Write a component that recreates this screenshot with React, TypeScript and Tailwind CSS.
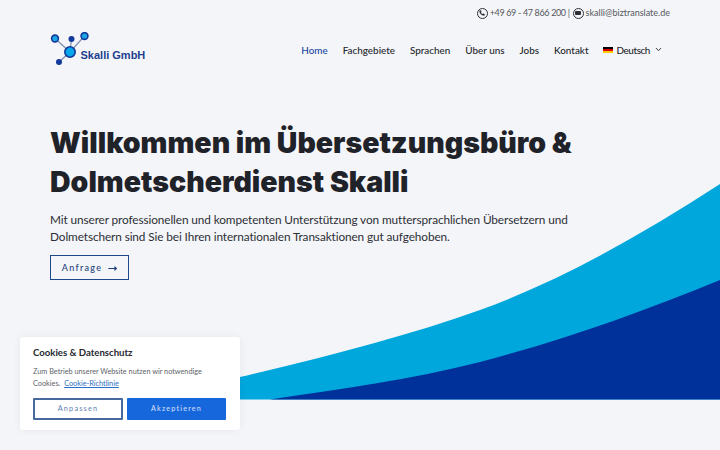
import { Phone, ChevronDown, MoveRight } from "lucide-react";

const body = "font-['Lato','Noto_Sans',sans-serif]";

function Logo() {
  return (
    <div className="flex items-center w-[100px] h-[40px] relative">
      <svg width="42" height="40" viewBox="0 0 42 40" className="shrink-0 relative top-[2px]">
        <g stroke="#7d8fb0" strokeWidth="1.2">
          <line x1="5" y1="6.5" x2="20" y2="20" />
          <line x1="34.5" y1="4" x2="20" y2="20" />
          <line x1="21.5" y1="7" x2="20" y2="20" />
          <line x1="9" y1="30" x2="20" y2="20" />
        </g>
        <circle cx="5" cy="6.5" r="3.4" fill="#1ba6e6" stroke="#12399b" strokeWidth="1.6" />
        <circle cx="34.5" cy="4" r="3.4" fill="#1ba6e6" stroke="#12399b" strokeWidth="1.6" />
        <circle cx="21.5" cy="7" r="3" fill="#12399b" />
        <circle cx="20" cy="20" r="5.2" fill="#06a7ec" stroke="#12399b" strokeWidth="1.6" />
        <circle cx="9" cy="30" r="3" fill="#12399b" />
      </svg>
      <span className="absolute left-[30.5px] top-[18px] font-['Liberation_Sans',sans-serif] font-bold text-[11px] leading-[14px] text-[#1d3f8f] whitespace-nowrap">
        Skalli GmbH
      </span>
    </div>
  );
}

const nav = ["Fachgebiete", "Sprachen", "Über uns", "Jobs", "Kontakt"];

export default function App() {
  return (
    <div className={`relative w-[720px] h-[450px] overflow-hidden bg-[#f4f5f8] ${body}`}>
      <svg className="absolute left-0 top-0" width="720" height="450" viewBox="0 0 720 450">
        <path d="M100 399.5 C 180 388, 240 377, 240 377 C 330 356, 410 335, 480 310 C 560 281, 640 236, 720 184 V399.5 Z" fill="#00a7dd" />
        <path d="M270 399.5 C 340 389, 410 380, 480 362 C 560 341, 640 313, 720 280 V399.5 Z" fill="#00319b" />
      </svg>

      <div className="relative flex flex-col px-[50px]">
        <div className="flex justify-end items-center h-[26px] gap-[2px] text-[9px] text-[#55585f] whitespace-nowrap">
          <span className="flex items-center justify-center w-[11px] h-[11px] rounded-full border border-[#2c2f36]">
            <Phone size={6} fill="#2c2f36" strokeWidth={1} color="#2c2f36" />
          </span>
          <span className="tracking-[-0.35px]">+49 69 - 47 866 200 |</span>
          <span className="flex items-center justify-center w-[11px] h-[11px] rounded-full border border-[#2c2f36] ml-[1px]">
            <span className="w-[6px] h-[4px] rounded-[1px] bg-[#2c2f36]" />
          </span>
          <span>skalli@biztranslate.de</span>
        </div>

        <div className="flex items-center justify-between h-[48px] mb-[2px]">
          <Logo />
          <nav className="flex items-center gap-[15px] pr-[7px] text-[9.9px] font-medium text-[#23262d] whitespace-nowrap">
            <span className="text-[#1a46a0]">Home</span>
            {nav.map((n) => (
              <span key={n}>{n}</span>
            ))}
            <span className="flex items-center">
              <span className="flex flex-col w-[10px] h-[6px] mr-[3px]">
                <span className="h-[2px] bg-black" />
                <span className="h-[2px] bg-[#dd0000]" />
                <span className="h-[2px] bg-[#ffce00]" />
              </span>
              <span className="tracking-[-0.4px]">Deutsch</span>
              <ChevronDown size={9} strokeWidth={2.5} className="ml-[4px]" />
            </span>
          </nav>
        </div>

        <h1 className="mt-[47px] font-['Inter',sans-serif] font-black text-[28.5px] leading-[39px] text-[#1f2229] whitespace-nowrap">
          Willkommen im Übersetzungsbüro &amp;
          <br />
          Dolmetscherdienst Skalli
        </h1>

        <p className="mt-[10px] text-[11.8px] tracking-[-0.1px] leading-[17px] text-[#2c2f36] whitespace-nowrap">
          Mit unserer professionellen und kompetenten Unterstützung von muttersprachlichen Übersetzern und
          <br />
          Dolmetschern sind Sie bei Ihren internationalen Transaktionen gut aufgehoben.
        </p>

        <div className="mt-[10px] flex items-center justify-center gap-[6px] w-[79px] h-[25px] pt-[1px] border border-[#1e4a8c] text-[9px] font-medium tracking-[1.3px] text-[#1e3f7c]">
          Anfrage
          <MoveRight size={9} strokeWidth={3} />
        </div>
      </div>

      <div className="absolute left-[20px] top-[337px] w-[220px] h-[93px] bg-white rounded-[3px] shadow-[0_0_8px_rgba(0,0,0,0.06)] px-[13px] pt-[10px]">
        <div className="text-[9.6px] leading-[12px] font-bold text-[#24272e]">Cookies &amp; Datenschutz</div>
        <p className="mt-[7px] text-[7.3px] leading-[12px] text-[#60636a] whitespace-nowrap">
          Zum Betrieb unserer Website nutzen wir notwendige
          <br />
          Cookies. <span className="ml-[2px] text-[#2b6fc4] underline">Cookie-Richtlinie</span>
        </p>
        <div className="mt-[8px] flex gap-[4px]">
          <div className="flex items-center justify-center w-[90px] h-[22px] border-2 border-[#47699d] rounded-[1px] bg-white text-[7.3px] tracking-[1.2px] text-[#5d7fb3]">
            Anpassen
          </div>
          <div className="flex items-center justify-center w-[99px] h-[22px] rounded-[1px] bg-[#1767dc] text-[7.2px] tracking-[1.2px] text-white/80">
            Akzeptieren
          </div>
        </div>
      </div>
    </div>
  );
}
